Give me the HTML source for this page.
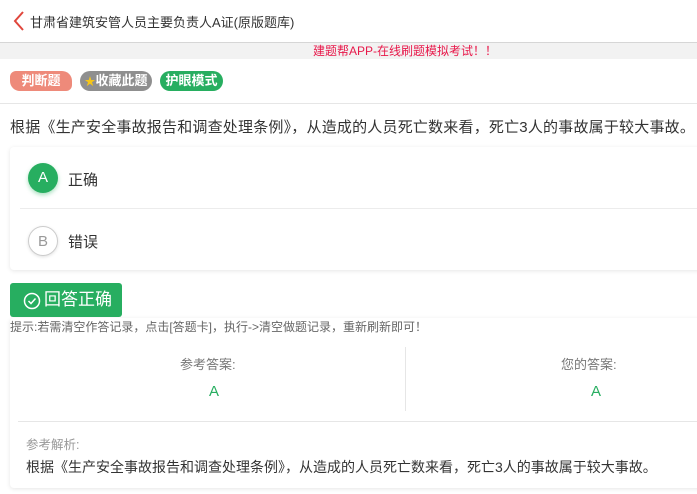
<!DOCTYPE html>
<html><head><meta charset="utf-8"><style>
*{margin:0;padding:0;box-sizing:border-box}
body{width:697px;height:494px;background:#fff;font-family:"Liberation Sans","Noto Sans CJK SC",sans-serif;position:relative;overflow:hidden;color:#333}
.a{position:absolute;white-space:nowrap}
.tag{position:absolute;top:71px;height:20px;border-radius:10px;color:#fff;font-size:13px;font-weight:bold;line-height:20px;text-align:center}
.circ{position:absolute;width:30px;height:30px;border-radius:50%;text-align:center;line-height:30px;font-size:15px}
</style></head><body>
<svg class="a" style="left:12px;top:10px" width="14" height="22"><path d="M11 2 L3 11 L11 20" stroke="#e0463c" stroke-width="2" fill="none"/></svg>
<div class="a" style="left:30px;top:12px;font-size:13px;color:#333">甘肃省建筑安管人员主要负责人A证(原版题库)</div>
<div class="a" style="left:0;top:42px;width:697px;height:1px;background:#d6d6d6"></div>
<div class="a" style="left:0;top:43px;width:697px;height:16px;background:#f2f2f2"></div>
<div class="a" style="left:313px;top:44px;font-size:12px;color:#e8184a;line-height:14px">建题帮APP-在线刷题模拟考试！！</div>
<div class="tag" style="left:10px;width:62px;background:#ee8a7a;border-radius:6px 10px 6px 10px">判断题</div>
<div class="tag" style="left:80px;width:72px;background:#8f8f8f"><span style="color:#f5c518;font-size:11px">★</span>收藏此题</div>
<div class="tag" style="left:160px;width:63px;background:#27ae60">护眼模式</div>
<div class="a" style="left:0;top:103px;width:697px;height:1px;background:#e6e6e6"></div>
<div class="a" style="left:10px;top:116px;font-size:15px;letter-spacing:0.2px;color:#333">根据《生产安全事故报告和调查处理条例》，从造成的人员死亡数来看，死亡3人的事故属于较大事故。</div>
<div class="a" style="left:10px;top:147px;width:700px;height:123px;background:#fff;box-shadow:0 1px 5px rgba(0,0,0,.1);border-radius:4px"></div>
<div class="circ" style="left:28px;top:163px;background:#27ae60;color:#fff;box-shadow:0 2px 4px rgba(39,174,96,.4)">A</div>
<div class="a" style="left:68px;top:169px;font-size:15px">正确</div>
<div class="a" style="left:20px;top:208px;width:677px;height:1px;background:#ececec"></div>
<div class="circ" style="left:28px;top:226px;border:1px solid #ccc;color:#999;box-shadow:0 1px 3px rgba(0,0,0,.12)">B</div>
<div class="a" style="left:68px;top:231px;font-size:15px">错误</div>
<div class="a" style="left:10px;top:318px;width:700px;height:170px;background:#fff;box-shadow:0 1px 5px rgba(0,0,0,.1);border-radius:4px"></div>
<div class="a" style="left:10px;top:283px;width:112px;height:34px;background:#27ae60;border-radius:3px;color:#fff;font-size:17px;line-height:34px;padding-left:34px">回答正确</div>
<svg class="a" style="left:23px;top:292px" width="18" height="18"><circle cx="9" cy="9" r="7.5" stroke="#fff" stroke-width="1.5" fill="none"/><path d="M5.5 9 L8 11.5 L12.5 6.5" stroke="#fff" stroke-width="1.5" fill="none"/></svg>
<div class="a" style="left:10px;top:318px;font-size:12px;color:#666">提示:若需清空作答记录，点击[答题卡]，执行->清空做题记录，重新刷新即可！</div>
<div class="a" style="left:180px;top:354px;font-size:13px;color:#777">参考答案:</div>
<div class="a" style="left:209px;top:383px;font-size:15px;color:#27ae60">A</div>
<div class="a" style="left:405px;top:347px;width:1px;height:64px;background:#e6e6e6"></div>
<div class="a" style="left:561px;top:354px;font-size:13px;color:#777">您的答案:</div>
<div class="a" style="left:591px;top:383px;font-size:15px;color:#27ae60">A</div>
<div class="a" style="left:18px;top:421px;width:679px;height:1px;background:#e6e6e6"></div>
<div class="a" style="left:26px;top:434px;font-size:12.5px;color:#999">参考解析:</div>
<div class="a" style="left:26px;top:457px;font-size:14px;color:#333">根据《生产安全事故报告和调查处理条例》，从造成的人员死亡数来看，死亡3人的事故属于较大事故。</div>
</body></html>
